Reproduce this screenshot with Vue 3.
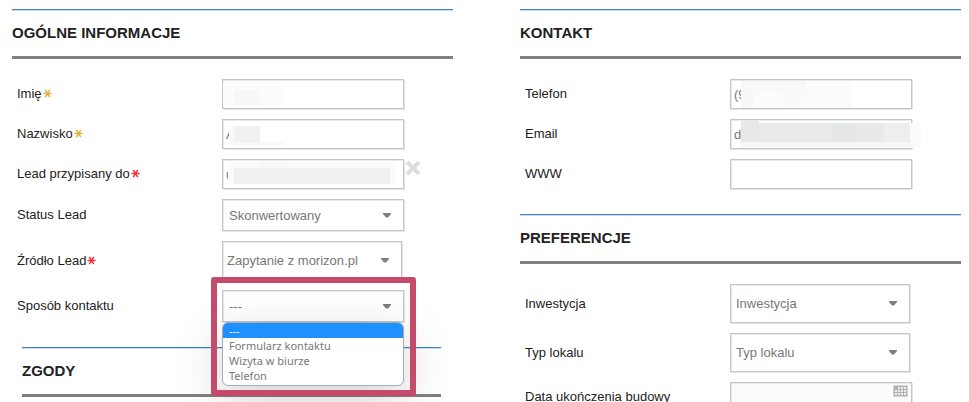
<script setup>
import { ref } from 'vue'

const firstName = ref('')
const lastName = ref('A')
const owner = ref('u')
const status = ref('Skonwertowany')
const source = ref('Zapytanie z morizon.pl')
const contactWay = ref('---')
const phone = ref('(9')
const email = ref('dj')
const www = ref('')
const investment = ref('Inwestycja')
const unitType = ref('Typ lokalu')
const completion = ref('')

const contactOptions = ['---', 'Formularz kontaktu', 'Wizyta w biurze', 'Telefon']

// Blocks that cover private values: x, y, width, height, fill
const masks = {
  firstName: [
    [1, 3, 60, 24, '#fcfcfc'],
    [12, 11, 26, 16, '#f8f8f8'],
  ],
  lastName: [
    [7, 7, 5, 19, '#f9f9f9'],
    [12, 7, 26, 16, '#f1f1f1'],
    [7, 23, 56, 3, '#f9f9f9'],
  ],
  owner: [
    [6, 3, 168, 22, '#fafafa'],
    [38, 3, 26, 6, '#f7f7f7'],
    [12, 9, 156, 16, '#f1f1f1'],
  ],
  phone: [
    [11, 2, 65, 27, '#f8f8f8'],
    [76, 2, 46, 27, '#fbfbfb'],
    [24, 11, 26, 18, '#fbfbfb'],
    [50, 11, 26, 18, '#fafafa'],
  ],
  email: [
    [11, 2, 18, 21, '#e8e8e7'],
    [29, 4, 73, 19, '#eaeaea'],
    [102, 4, 26, 19, '#e5e8e7'],
    [128, 4, 26, 19, '#e9e9e9'],
    [154, 4, 26, 19, '#eeeeee'],
    [11, 23, 169, 5, '#f7f7f7'],
    [180, 4, 11, 25, '#fafbfb'],
  ],
}
</script>

<template>
  <main class="page">
    <form class="column" @submit.prevent>
      <section>
        <h2 class="title">OGÓLNE INFORMACJE</h2>
        <div class="fields">
          <div class="row">
            <label for="first">Imię<svg class="star gold" viewBox="0 0 9 9"><path d="M0.5 4.5H8.5M2.3 0.8L6.7 8.2M6.7 0.8L2.3 8.2" /></svg></label>
            <div class="control">
              <input id="first" v-model="firstName" type="text" />
              <svg class="mask"><rect v-for="(m, i) in masks.firstName" :key="i" :x="m[0]" :y="m[1]" :width="m[2]" :height="m[3]" :fill="m[4]" /></svg>
            </div>
          </div>
          <div class="row">
            <label for="last">Nazwisko<svg class="star gold" viewBox="0 0 9 9"><path d="M0.5 4.5H8.5M2.3 0.8L6.7 8.2M6.7 0.8L2.3 8.2" /></svg></label>
            <div class="control">
              <input id="last" v-model="lastName" type="text" />
              <svg class="mask"><rect v-for="(m, i) in masks.lastName" :key="i" :x="m[0]" :y="m[1]" :width="m[2]" :height="m[3]" :fill="m[4]" /></svg>
            </div>
          </div>
          <div class="row">
            <label for="owner">Lead przypisany do<svg class="star red" viewBox="0 0 9 9"><path d="M0.5 4.5H8.5M2.3 0.8L6.7 8.2M6.7 0.8L2.3 8.2" /></svg></label>
            <div class="control">
              <input id="owner" v-model="owner" type="text" />
              <svg class="mask"><rect v-for="(m, i) in masks.owner" :key="i" :x="m[0]" :y="m[1]" :width="m[2]" :height="m[3]" :fill="m[4]" /></svg>
            </div>
            <button class="clear" type="button" aria-label="Wyczyść" @click="owner = ''">
              <svg viewBox="0 0 18 18"><path d="M3 3L15 15M15 3L3 15" /></svg>
            </button>
          </div>
          <div class="row">
            <label for="status">Status Lead</label>
            <div class="control">
              <select id="status" v-model="status"><option>Skonwertowany</option></select>
              <svg class="arrow" viewBox="0 0 8 5"><path d="M0 0H8V1L5 4.5H3L0 1Z" /></svg>
            </div>
          </div>
          <div class="row">
            <label for="source">Źródło Lead<svg class="star red" viewBox="0 0 9 9"><path d="M0.5 4.5H8.5M2.3 0.8L6.7 8.2M6.7 0.8L2.3 8.2" /></svg></label>
            <div class="control narrow">
              <select id="source" v-model="source" class="tall snug"><option>Zapytanie z morizon.pl</option></select>
              <svg class="arrow" viewBox="0 0 8 5"><path d="M0 0H8V1L5 4.5H3L0 1Z" /></svg>
            </div>
          </div>
          <div class="row">
            <label for="way">Sposób kontaktu</label>
            <div class="control">
              <select id="way" v-model="contactWay">
                <option v-for="o in contactOptions" :key="o">{{ o }}</option>
              </select>
              <svg class="arrow" viewBox="0 0 8 5"><path d="M0 0H8V1L5 4.5H3L0 1Z" /></svg>
              <ul class="menu" role="listbox">
                <li v-for="o in contactOptions" :key="o" role="option" :class="{ active: o === contactWay }" @click="contactWay = o">{{ o }}</li>
              </ul>
              <div class="highlight"></div>
            </div>
          </div>
        </div>
      </section>
      <section class="inset">
        <h2 class="title">ZGODY</h2>
      </section>
    </form>

    <form class="column" @submit.prevent>
      <section>
        <h2 class="title">KONTAKT</h2>
        <div class="fields">
          <div class="row">
            <label for="phone">Telefon</label>
            <div class="control">
              <input id="phone" v-model="phone" type="text" />
              <svg class="mask"><rect v-for="(m, i) in masks.phone" :key="i" :x="m[0]" :y="m[1]" :width="m[2]" :height="m[3]" :fill="m[4]" /></svg>
            </div>
          </div>
          <div class="row">
            <label for="email">Email</label>
            <div class="control">
              <input id="email" v-model="email" type="text" />
              <svg class="mask"><rect v-for="(m, i) in masks.email" :key="i" :x="m[0]" :y="m[1]" :width="m[2]" :height="m[3]" :fill="m[4]" /></svg>
            </div>
          </div>
          <div class="row">
            <label for="www">WWW</label>
            <div class="control"><input id="www" v-model="www" type="text" /></div>
          </div>
        </div>
      </section>
      <section>
        <h2 class="title">PREFERENCJE</h2>
        <div class="fields">
          <div class="row">
            <label for="investment">Inwestycja</label>
            <div class="control narrow">
              <select id="investment" v-model="investment" class="tall"><option>Inwestycja</option></select>
              <svg class="arrow" viewBox="0 0 8 5"><path d="M0 0H8V1L5 4.5H3L0 1Z" /></svg>
            </div>
          </div>
          <div class="row">
            <label for="unit">Typ lokalu</label>
            <div class="control narrow">
              <select id="unit" v-model="unitType" class="tall"><option>Typ lokalu</option></select>
              <svg class="arrow" viewBox="0 0 8 5"><path d="M0 0H8V1L5 4.5H3L0 1Z" /></svg>
            </div>
          </div>
          <div class="row">
            <label for="completion">Data ukończenia budowy</label>
            <div class="control">
              <input id="completion" v-model="completion" class="date" type="text" />
              <svg class="calendar" viewBox="0 0 15 12">
                <rect width="15" height="12" fill="#d6d6d6" />
                <rect x="1" y="1" width="13" height="10" fill="#b2b2b2" />
                <path d="M5 2h2v2H5zM8 2h2v2H8zM11 2h2v2H11zM2 5h2v2H2zM5 5h2v2H5zM8 5h2v2H8zM11 5h2v2H11zM2 8h2v2H2zM5 8h2v2H5zM8 8h2v2H8zM11 8h2v2H11z" fill="#f0f0f0" />
              </svg>
            </div>
          </div>
        </div>
      </section>
    </form>
  </main>
</template>

<style>
body {
  margin: 0;
  background: #fff;
}
</style>

<style scoped>
.page {
  box-sizing: border-box;
  height: 100vh;
  overflow: hidden;
  padding: 9px 8px 0 12px;
  display: grid;
  grid-template-columns: 1fr 1fr;
  column-gap: 67px;
  align-items: start;
  font-family: "Liberation Sans", Arial, sans-serif;
  font-size: 13px;
  color: #222;
}
.column {
  display: flex;
  flex-direction: column;
  gap: 25px;
  min-width: 0;
}
.inset {
  margin: 0 12px 0 10px;
}
.title {
  box-sizing: border-box;
  height: 50px;
  margin: 0;
  padding-bottom: 1px;
  border-top: 1px solid #3f83bf;
  border-bottom: 3px solid #808080;
  box-shadow: inset 0 1px #c5dcf0;
  display: flex;
  align-items: center;
  font-size: 15px;
  font-weight: 700;
}
.fields {
  display: flex;
  flex-direction: column;
  gap: 10px;
  padding: 20px 0 0 5px;
}
.row {
  display: grid;
  grid-template-columns: 205px 1fr 49px;
  align-items: center;
}
label {
  line-height: 18px;
}
.star {
  width: 9px;
  height: 9px;
  margin-left: 1px;
  fill: none;
  stroke-width: 1.5;
}
.gold {
  stroke: #e6b03a;
}
.red {
  stroke: #fa3038;
}
.control {
  position: relative;
  display: grid;
  align-items: center;
}
.control > * {
  grid-area: 1 / 1;
}
.narrow {
  margin-right: 2px;
}
input,
select {
  box-sizing: border-box;
  width: 100%;
  height: 30px;
  margin: 0;
  padding: 0 3px;
  border: 1px solid #c6c6c6;
  border-radius: 0;
  background: #fff;
  box-shadow: inset 1px 1px #e9e9e9, 1px 1px #e4e4e4;
  color: #777;
  font: inherit;
  outline: none;
}
select {
  height: 32px;
  padding: 0 20px 0 6px;
  appearance: none;
}
.tall {
  height: 39px;
  padding-left: 5px;
}
.snug {
  padding-left: 4px;
}
.date {
  background: #fcfcfc;
}
.mask {
  width: 100%;
  height: 30px;
  overflow: visible;
  pointer-events: none;
}
.arrow {
  justify-self: end;
  width: 8px;
  height: 5px;
  margin-right: 13px;
  fill: #808080;
  pointer-events: none;
}
.calendar {
  align-self: start;
  justify-self: end;
  width: 15px;
  height: 12px;
  margin: 3px 4px 0 0;
}
.clear {
  align-self: start;
  width: 18px;
  height: 18px;
  padding: 0;
  border: 0;
  background: none;
}
.clear svg {
  display: block;
  stroke: #dedede;
  stroke-width: 4;
  fill: none;
}
.menu {
  position: absolute;
  z-index: 1;
  top: 32px;
  left: 0;
  right: 0;
  margin: 0;
  padding: 0 0 2px;
  border: 1px solid #aaa;
  border-radius: 6px;
  background: #fff;
  box-shadow: 0 14px 50px rgba(0, 0, 0, 0.18);
  overflow: hidden;
  list-style: none;
  font-family: "Noto Sans", sans-serif;
  font-size: 11px;
  line-height: 15px;
  color: #777;
}
.menu li {
  padding: 0 6px;
}
.menu .active {
  background: #1e90ff;
  color: #fff;
}
.highlight {
  position: absolute;
  z-index: 2;
  inset: -13px -12px -74px -11px;
  border: 6px solid #c54b6c;
  border-radius: 3px;
  pointer-events: none;
}
</style>
